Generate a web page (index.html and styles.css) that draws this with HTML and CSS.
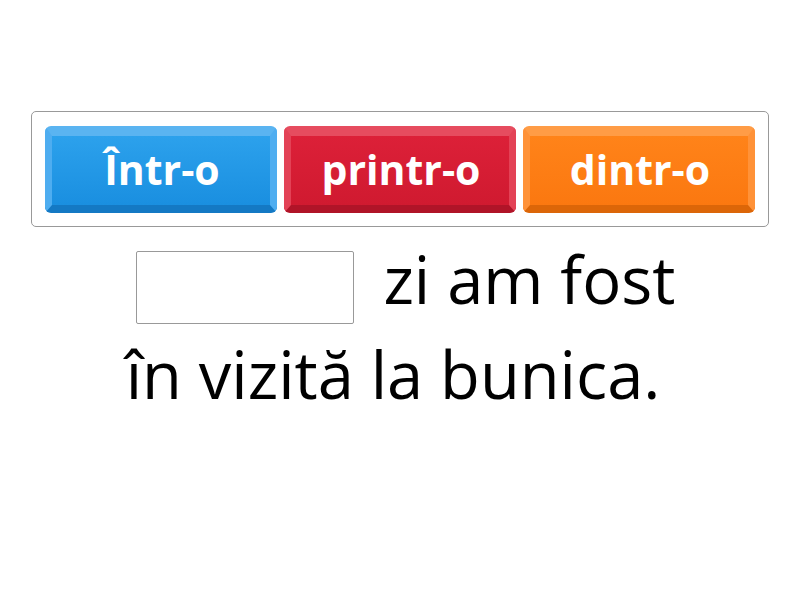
FILE: index.html
```html
<!DOCTYPE html>
<html lang="ro">
<head>
<meta charset="UTF-8" />
<meta name="viewport" content="width=device-width, initial-scale=1.0"/>
<title>Într-o / printr-o / dintr-o</title>
<link rel="stylesheet" href="styles.css">
</head>
<body>

<div class="stage">
  <div class="bank">
    <div class="tile blue"><span>Într-o</span></div>
    <div class="tile red"><span>printr-o</span></div>
    <div class="tile orange"><span>dintr-o</span></div>
  </div>

  <div class="sentence">
    <p class="line first"><span class="slot"></span> zi am fost</p>
    <p class="line second">în vizită la bunica.</p>
  </div>
</div>

</body>
</html>
```

FILE: styles.css
```css
body {
  font-family: "Open Sans", Arial, sans-serif;
  background: #ffffff;
  margin: 0;
  padding: 0;
}

.stage {
  width: 800px;
  height: 600px;
  padding-top: 111px;
  box-sizing: border-box;
}

.bank {
  width: 738px;
  height: 116px;
  margin-left: 31px;
  box-sizing: border-box;
  border: 1px solid #999999;
  border-radius: 5px;
  padding: 14px 13px;
  display: flex;
  gap: 7px;
}

.tile {
  width: 232px;
  height: 87px;
  box-sizing: border-box;
  border-style: solid;
  border-width: 10px 7px 8px 7px;
  border-radius: 6px;
  display: flex;
  align-items: center;
  justify-content: center;
  color: #ffffff;
  font-weight: bold;
  font-size: 41px;
}

.tile span {
  margin-top: -3px;
  margin-left: 2px;
}

.blue {
  background: linear-gradient(#2ca1ec, #1a8fe0);
  border-color: #5ab4f1 #4eadf0 #1479c4 #4eadf0;
}

.red {
  background: linear-gradient(#dc2038, #d01a30);
  border-color: #e64c5f #e34256 #b01428 #e34256;
}

.orange {
  background: linear-gradient(#ff8319, #fb7810);
  border-color: #ff9c46 #ff9238 #dc6608 #ff9238;
}

.sentence {
  text-align: center;
  margin-top: 5px;
  color: #000000;
  font-size: 65px;
}

.line {
  margin: 0;
  line-height: 95px;
}

.first {
  padding-left: 11px;
}

.second {
  padding-right: 14px;
}

.slot {
  display: inline-block;
  width: 218px;
  height: 73px;
  box-sizing: border-box;
  border: 1px solid #999999;
  border-radius: 2px;
  vertical-align: -20px;
  margin-right: 13px;
}
```
